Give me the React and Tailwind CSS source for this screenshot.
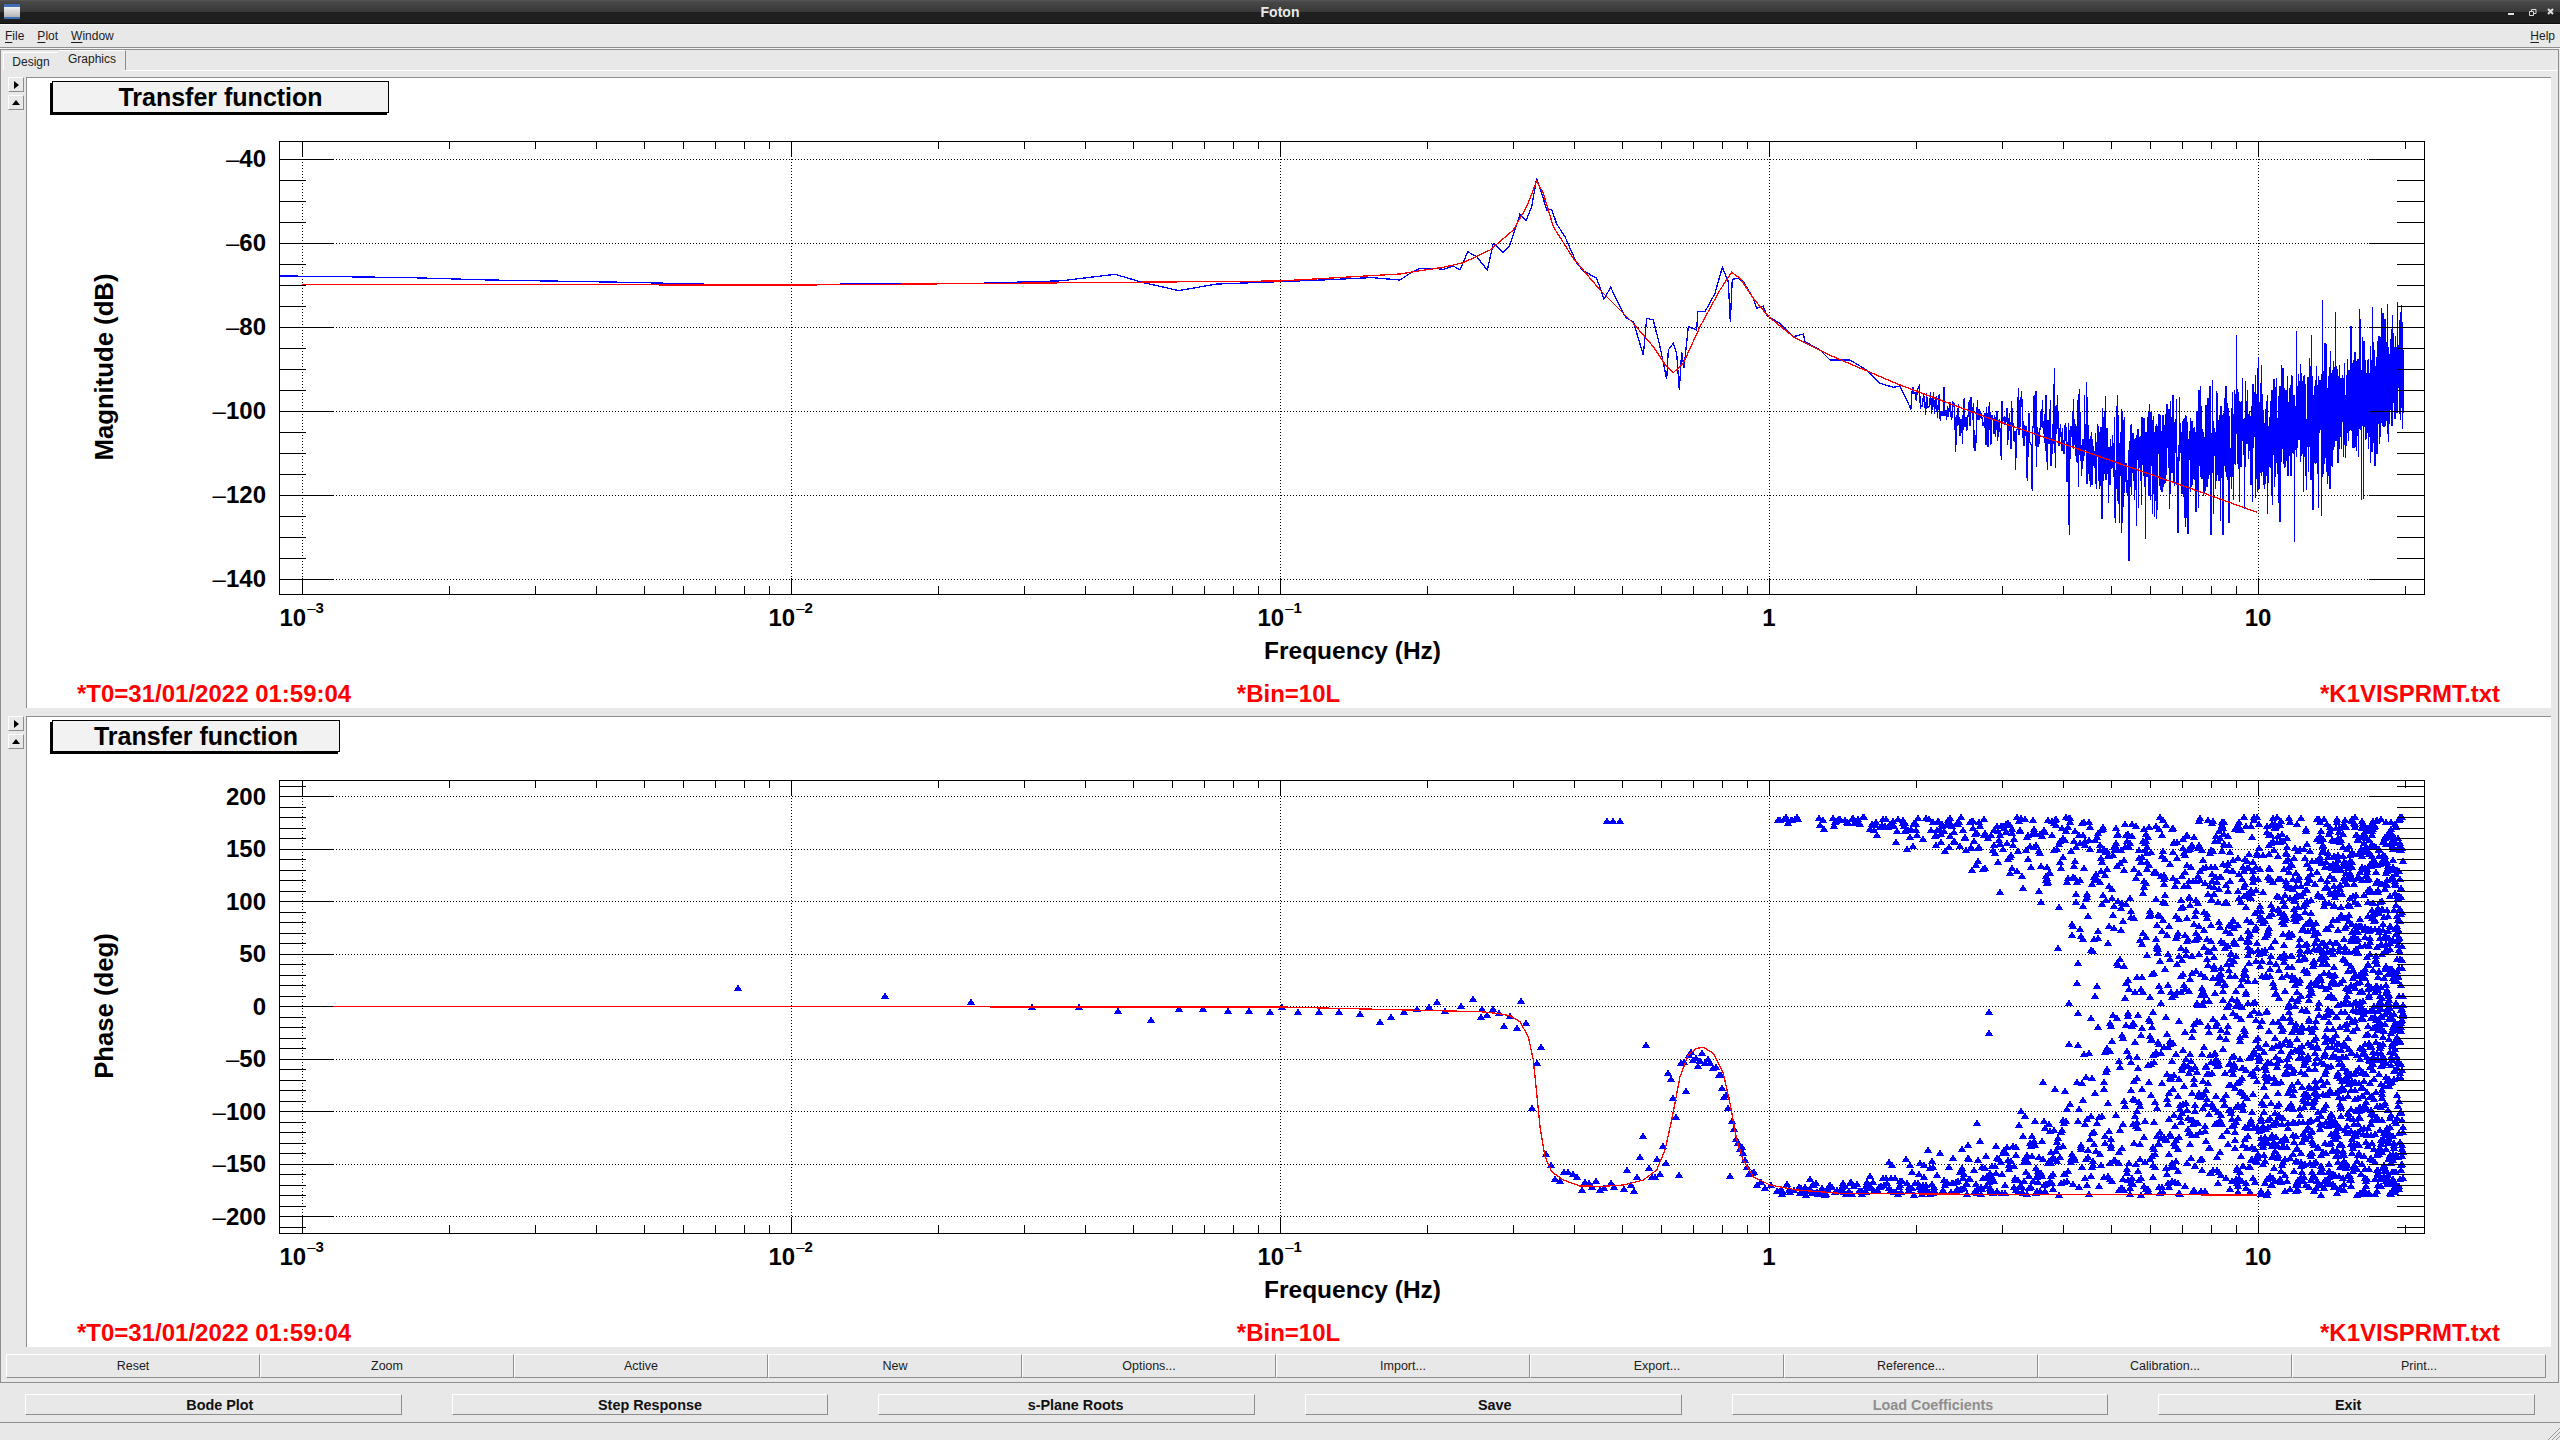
import React from 'react';

// small seeded rng so the noisy traces stay the same on every load
function mulberry(seed) {
  let a = seed;
  return () => {
    a |= 0;
    a = (a + 0x6d2b79f5) | 0;
    let t = Math.imul(a ^ (a >>> 15), 1 | a);
    t = (t + Math.imul(t ^ (t >>> 7), 61 | t)) ^ t;
    return ((t ^ (t >>> 14)) >>> 0) / 4294967296;
  };
}
function gauss(rnd) {
  return Math.sqrt(-2 * Math.log(rnd() + 1e-9)) * Math.cos(2 * Math.PI * rnd());
}
function lerp(tbl, x) {
  for (let i = 1; i < tbl.length; i++) {
    if (x <= tbl[i][0]) {
      const [x0, y0] = tbl[i - 1];
      const [x1, y1] = tbl[i];
      return y0 + ((y1 - y0) * (x - x0)) / (x1 - x0);
    }
  }
  return tbl[tbl.length - 1][1];
}

const X_DEC = 489;
const X_ONE = 1768;
const fx = (f) => X_ONE + X_DEC * Math.log10(f);
const toPath = (pts) => 'M' + pts.map(([x, y]) => `${x.toFixed(1)} ${y.toFixed(1)}`).join('L');

// converters from measured crops to page pixels
const ov = ([x, y]) => [x * 1.6327, y * 1.6327];
const z4 = ([x, y]) => [1400 + x / 3, 150 + y / 3];
const z5 = ([x, y]) => [1900 + x / 2.8, 280 + y / 3];
const z6 = ([x, y]) => [1480 + x / 3, 980 + y / 3];

const magRed = [
  [302, 284.5], [800, 285], [1280, 281],
  ...[[0,372],[60,362],[130,352],[190,338],[270,300],[340,240],[380,170],[410,93],[430,130],[460,230],[520,325],[600,420],[700,520],[760,590],[800,650],[820,668],[850,640],[900,530],[960,420],[995,367],[1020,385],[1060,445],[1106,500],[1180,560],[1300,620],[1500,705]].map(z4),
  ...[[100,355],[250,415],[400,470],[600,545],[800,620],[1000,697]].map(z5),
];

const magBlue = [
  ...[[171,169],[250,170],[300,171.5],[390,173],[450,174.5],[520,174],[600,173.5],[650,172],[683,168],[700,173],[722,178],[745,174],[770,173],[810,171.5],[840,170]].map(ov),
  ...[[0,390],[30,370],[60,355],[100,355],[130,358],[160,348],[180,360],[203,305],[230,320],[262,360],[280,280],[310,308],[330,285],[360,192],[378,213],[395,170],[410,85],[425,130],[440,180],[455,178],[470,222],[495,260],[530,340],[550,362],[590,385],[612,447],[632,412],[670,490],[680,505],[700,515],[730,615],[740,505],[760,510],[780,590],[800,688],[805,600],[820,580],[830,610],[838,720],[845,605],[852,655],[865,530],[890,540],[893,485],[915,485],[945,430],[967,352],[985,395],[991,515],[997,388],[1015,385],[1030,395],[1060,445],[1070,475],[1090,468],[1100,497],[1140,520],[1180,560],[1210,552],[1215,575],[1260,600],[1290,630],[1350,630],[1400,660],[1440,700],[1480,712],[1500,708]].map(z4),
];

// the noisy part of the magnitude above 2 Hz
const bandMid = [[0,320],[200,420],[400,470],[600,530],[800,520],[1000,450],[1200,400],[1400,290],[1420,290]].map(z5);
const bandSig = [[0,12],[200,40],[400,65],[600,85],[800,85],[1000,85],[1200,85],[1400,75],[1420,75]].map(([x, s]) => [1900 + x / 2.8, s / 3]);
const spikes = [[1183,60],[1219,97],[1365,72],[1401,97],[1104,785],[775,830],[665,790],[743,318],[1152,165]].map(z5);

(() => {
  const rnd = mulberry(7);
  for (let f = 1.96; f < 19.95; f += 0.01) {
    const x = fx(f);
    const s = lerp(bandSig, x);
    let g = gauss(rnd);
    if (g > 0) g *= 1.15;
    let y = lerp(bandMid, x) + s * g;
    const hit = spikes.find((p) => Math.abs(p[0] - x) < 0.06);
    if (hit) y = hit[1];
    magBlue.push([x, y]);
  }
})();

const phaseRed = [
  [302, 1006.5], [1280, 1007],
  ...[[0,95],[50,100],[90,107],[120,125],[145,170],[160,240],[170,340],[180,440],[195,530],[215,575],[250,600],[300,618],[370,619],[430,615],[490,600],[530,570],[555,510],[575,420],[600,290],[625,225],[650,205],[670,202],[700,220],[730,280],[750,370],[770,480],[790,540],[820,590],[870,615],[950,630],[1080,640],[1500,643]].map(z6),
  [2257, 1195],
];

const phasePts = [
  ...[[452,605],[542,610],[595,614],[632,617],[661,617],[685,619],[705,625],[722,618],[737,618],[752,619],[765,619],[778,620],[785,617],[795,620],[808,620],[820,620],[833,621],[845,626],[852,623],[860,620],[868,618],[875,617],[880,614],[885,619],[895,616],[902,612],[908,618],[984,503],[988,503],[992,503],[1008,640],[1218,620],[1218,633]].map(ov),
  ...[[3,110],[22,105],[40,87],[58,98],[90,107],[73,137],[110,143],[124,62],[139,128],[184,200],[170,248],[155,385],[199,521],[214,554],[226,597],[240,602],[252,575],[264,575],[279,582],[292,590],[305,629],[316,605],[326,609],[337,620],[348,603],[361,631],[373,624],[394,608],[403,620],[433,628],[442,569],[453,614],[463,634],[472,590],[481,530],[490,467],[499,194],[508,563],[516,590],[524,592],[532,536],[541,581],[549,497],[559,550],[564,278],[574,296],[580,353],[589,410],[598,584],[603,248],[612,245],[619,332],[626,225],[633,215],[640,240],[648,235],[655,258],[660,243],[667,218],[676,248],[684,238],[690,250],[700,265],[708,262],[716,284],[722,284],[727,323],[733,350],[738,345],[744,383],[751,587],[757,423],[763,447],[768,478],[773,490],[779,507],[785,500],[790,518],[796,540],[801,561],[808,582],[815,578],[823,575],[830,615],[843,605],[856,625],[873,615],[890,632],[1447,508],[1360,560],[1492,428],[1493,540]].map(z6),
];

(() => {
  const rnd = mulberry(21);
  for (let f = 1.05; f < 19.9; f += 0.006) {
    let s = Math.max(4, 3.6 * f * f);
    let p = -178 + s * gauss(rnd);
    p = ((p + 180) % 360 + 360) % 360 - 180;
    phasePts.push([fx(f), 1006 - p * 1.05]);
  }
})();

const triPath = phasePts
  .map(([x, y]) => {
    const a = Math.round(x);
    const b = Math.round(y);
    return `M${a - 4} ${b + 3}L${a} ${b - 4}L${a + 4} ${b + 3}Z`;
  })
  .join('');

const LEFT = 279;
const RIGHT = 2424;

function Plot({ top, bottom, firstY, step, count, sub, labels, yTitle, vbY, children }) {
  const dec = [-3, -2, -1, 0, 1].map((e) => 302 + X_DEC * (e + 3));
  const majorY = Array.from({ length: count }, (_, i) => firstY + i * step);
  const minorY = [];
  for (let y = firstY - step; y < bottom; y += step / sub) {
    if (y > top && y < bottom && !majorY.some((m) => Math.abs(m - y) < 1)) minorY.push(y);
  }
  const minorX = [];
  dec.forEach((x) => {
    for (let m = 2; m < 10; m++) {
      const mx = x + X_DEC * Math.log10(m);
      if (mx < RIGHT) minorX.push(Math.round(mx));
    }
  });
  const r = (v) => Math.round(v) + 0.5;
  let grid = '';
  let ticks = '';
  majorY.forEach((y) => {
    grid += `M${LEFT} ${r(y)}H${RIGHT}`;
    ticks += `M${LEFT} ${r(y)}h54M${RIGHT} ${r(y)}h-55`;
  });
  minorY.forEach((y) => {
    ticks += `M${LEFT} ${r(y)}h27M${RIGHT} ${r(y)}h-27`;
  });
  dec.forEach((x) => {
    grid += `M${r(x)} ${top}V${bottom}`;
    ticks += `M${r(x)} ${top}v16M${r(x)} ${bottom}v-16`;
  });
  minorX.forEach((x) => {
    ticks += `M${r(x)} ${top}v8M${r(x)} ${bottom}v-8`;
  });
  const xl = bottom + 32;
  const midY = (top + bottom) / 2 - 0.5;
  return (
    <svg className="block w-[2524px] h-[560px]" viewBox={`27 ${vbY} 2524 560`}>
      <path d={grid} stroke="#000" fill="none" strokeDasharray="1 2" shapeRendering="crispEdges" />
      {children}
      <path d={ticks} stroke="#000" fill="none" shapeRendering="crispEdges" />
      <rect x={LEFT + 0.5} y={top + 0.5} width={RIGHT - LEFT} height={bottom - top} fill="none" stroke="#000" shapeRendering="crispEdges" />
      {labels.map((t, i) => (
        <text key={t} x="266" y={firstY + i * step + 8.5} textAnchor="end" className="text-[24px] font-bold">
          {t < 0 && <tspan className="font-normal">–</tspan>}
          {Math.abs(t)}
        </text>
      ))}
      {[-3, -2, -1].map((e, i) => (
        <text key={e} x={dec[i] - 22.5} y={xl} className="text-[24px] font-bold">
          10
          <tspan dx="1" dy="-13" className="text-[15px] font-normal">–</tspan>
          <tspan className="text-[15px] font-bold">{-e}</tspan>
        </text>
      ))}
      <text x={dec[3]} y={xl} textAnchor="middle" className="text-[24px] font-bold">1</text>
      <text x={dec[4]} y={xl} textAnchor="middle" className="text-[24px] font-bold">10</text>
      <text x="1352.5" y={bottom + 65} textAnchor="middle" className="text-[24.5px] font-bold">Frequency (Hz)</text>
      <text x="113" y={midY} textAnchor="middle" transform={`rotate(-90 113 ${midY})`} className="text-[25.7px] font-bold">
        {yTitle}
      </text>
    </svg>
  );
}

function TitleBox({ width }) {
  return (
    <div className={`${width} mt-[3px] ml-[25px] h-[32px] bg-[#f2f2f2] border border-black shadow-[-2px_2px_0_0_#000] text-center text-[25px] leading-[30px] font-bold text-black`}>
      Transfer function
    </div>
  );
}

function Stamps() {
  return (
    <div className="grid grid-cols-3 pl-[50px] pr-[51px] h-[28px] text-[24px] leading-[28px] font-bold text-[#ff0000] whitespace-nowrap">
      <div>*T0=31/01/2022 01:59:04</div>
      <div className="text-center">*Bin=10L</div>
      <div className="text-right">*K1VISPRMT.txt</div>
    </div>
  );
}

function Pane({ children, className }) {
  return (
    <div className={`flex h-[631px] ${className}`}>
      <div className="w-[25px] shrink-0 flex flex-col gap-[3px] pl-[7px]">
        <div className="w-[16px] h-[15px] border-t border-l border-white border-b-[1px] border-r-[1px] border-b-[#8e8e8e] border-r-[#8e8e8e] flex items-center justify-center">
          <svg width="5" height="8" viewBox="0 0 5 8"><path d="M0 0L5 4L0 8Z" fill="#000" /></svg>
        </div>
        <div className="w-[16px] h-[15px] border-t border-l border-white border-b-[1px] border-r-[1px] border-b-[#8e8e8e] border-r-[#8e8e8e] flex items-center justify-center">
          <svg width="8" height="5" viewBox="0 0 8 5"><path d="M0 5L4 0L8 5Z" fill="#000" /></svg>
        </div>
      </div>
      <div className="w-[2525px] bg-white border-l border-t border-[#8e8e8e]">{children}</div>
    </div>
  );
}

const toolButtons = ['Reset', 'Zoom', 'Active', 'New', 'Options...', 'Import...', 'Export...', 'Reference...', 'Calibration...', 'Print...'];
const mainButtons = [
  { label: 'Bode Plot', cls: 'pl-[13px] text-[#111]' },
  { label: 'Step Response', cls: 'pl-[20px] text-[#111]' },
  { label: 's-Plane Roots', cls: 'pl-[18px] text-[#111]' },
  { label: 'Save', cls: 'pl-[3px] text-[#111]' },
  { label: 'Load Coefficients', cls: 'pl-[26px] text-[#8e8e8e]' },
  { label: 'Exit', cls: 'pl-[3px] text-[#111]' },
];

function Und({ children }) {
  return <span className="underline underline-offset-2">{children}</span>;
}

export default function App() {
  return (
    <div className="w-[2560px] h-[1440px] overflow-hidden flex flex-col bg-[#e8e8e8] font-['Liberation_Sans',sans-serif] text-[12px] text-[#1c1c1c]">
      {/* window title bar */}
      <div className="relative h-[24px] shrink-0 flex items-center justify-center bg-[linear-gradient(#585858_0,#474747_2px,#383838_12px,#202020_12px,#1e1e1e_23px,#000_24px)]">
        <div className="absolute left-[4px] top-[4px] w-[16px] h-[15px] bg-[linear-gradient(#3f6fb5_0,#3f6fb5_3px,#f0f0f0_3px,#b4b4b4_13px,#3f6fb5_13px)]" />
        <span className="text-[14px] font-bold text-[#e8e8e8]">Foton</span>
        <svg className="absolute right-[6px] top-[8px]" width="46" height="9" viewBox="0 0 46 9" fill="none" stroke="#ddd">
          <path d="M0 6.5H6M0 5.5H6" />
          <path d="M21.5 3.5h4v4h-4zM23.5 3V1.5h4.5v4H26" />
          <path d="M40 1l5 5M45 1l-5 5" strokeWidth="2" />
        </svg>
      </div>
      <div className="h-px shrink-0 bg-[#f4f4f4]" />

      {/* menu bar */}
      <div className="h-[23px] shrink-0 flex items-center justify-between pl-[5px] pr-[5px] border-b border-[#8e8e8e]">
        <div className="flex gap-[13px]">
          <span><Und>F</Und>ile</span>
          <span><Und>P</Und>lot</span>
          <span><Und>W</Und>indow</span>
        </div>
        <span><Und>H</Und>elp</span>
      </div>
      <div className="h-px shrink-0 bg-[#f4f4f4]" />

      {/* tab frame */}
      <div className="h-[1334px] shrink-0 w-[2559px] border-t border-l border-r border-b border-[#8e8e8e] flex flex-col">
        <div className="h-[20px] shrink-0 flex pl-[2px] items-end">
          <div className="w-[55px] h-[18px] border-t border-l border-white text-center leading-[19px] text-[#222]">Design</div>
          <div className="w-[67px] h-[20px] border-t border-r border-t-white border-r-[#8e8e8e] text-center leading-[16px] ml-[1px]">Graphics</div>
        </div>
        <div className="h-px shrink-0 ml-[124px] bg-white" />
        <div className="h-[6px] shrink-0" />
        <Pane>
          <TitleBox width="w-[337px]" />
          <div className="mt-[7px]">
            <Plot top={141} bottom={594} firstY={158.5} step={84} count={6} sub={4} labels={[-40, -60, -80, -100, -120, -140]} yTitle="Magnitude (dB)" vbY={120}>
              <path d={toPath(magBlue)} stroke="#0000ff" strokeWidth="1.3" fill="none" shapeRendering="crispEdges" />
              <path d={toPath(magRed)} stroke="#ff0000" strokeWidth="1.3" fill="none" shapeRendering="crispEdges" />
            </Plot>
          </div>
          <Stamps />
        </Pane>
        <Pane className="mt-[8px]">
          <TitleBox width="w-[288px]" />
          <div className="mt-[7px]">
            <Plot top={780} bottom={1233} firstY={796} step={52.5} count={9} sub={5} labels={[200, 150, 100, 50, 0, -50, -100, -150, -200]} yTitle="Phase (deg)" vbY={759}>
              <path d={triPath} fill="#0000ff" shapeRendering="crispEdges" />
              <path d={toPath(phaseRed)} stroke="#ff0000" strokeWidth="1.3" fill="none" shapeRendering="crispEdges" />
            </Plot>
          </div>
          <Stamps />
        </Pane>

        <div className="mt-[7px] ml-[5px] w-[2540px] h-[24px] shrink-0 grid grid-cols-10">
          {toolButtons.map((b) => (
            <button key={b} className="border-t border-l border-white border-b border-r border-b-[#8e8e8e] border-r-[#8e8e8e] text-center text-[12.5px] leading-[20px]">
              {b}
            </button>
          ))}
        </div>
      </div>

      {/* main buttons */}
      <div className="mt-[11px] h-[21px] shrink-0 grid grid-cols-6">
        {mainButtons.map((b) => (
          <button
            key={b.label}
            className={`mx-[25px] border-t border-l border-white border-b border-r border-b-[#8e8e8e] border-r-[#8e8e8e] text-center text-[14.4px] leading-[18px] font-bold ${b.cls}`}
          >
            {b.label}
          </button>
        ))}
      </div>

      {/* status bar */}
      <div className="relative mt-[7px] flex-1 border-t border-[#8e8e8e]">
        <svg className="absolute right-0 bottom-0" width="12" height="12" viewBox="0 0 12 12" stroke="#9a9a9a" shapeRendering="crispEdges">
          <path d="M0 12L12 0M4 12L12 4M8 12L12 8" />
        </svg>
      </div>
    </div>
  );
}
